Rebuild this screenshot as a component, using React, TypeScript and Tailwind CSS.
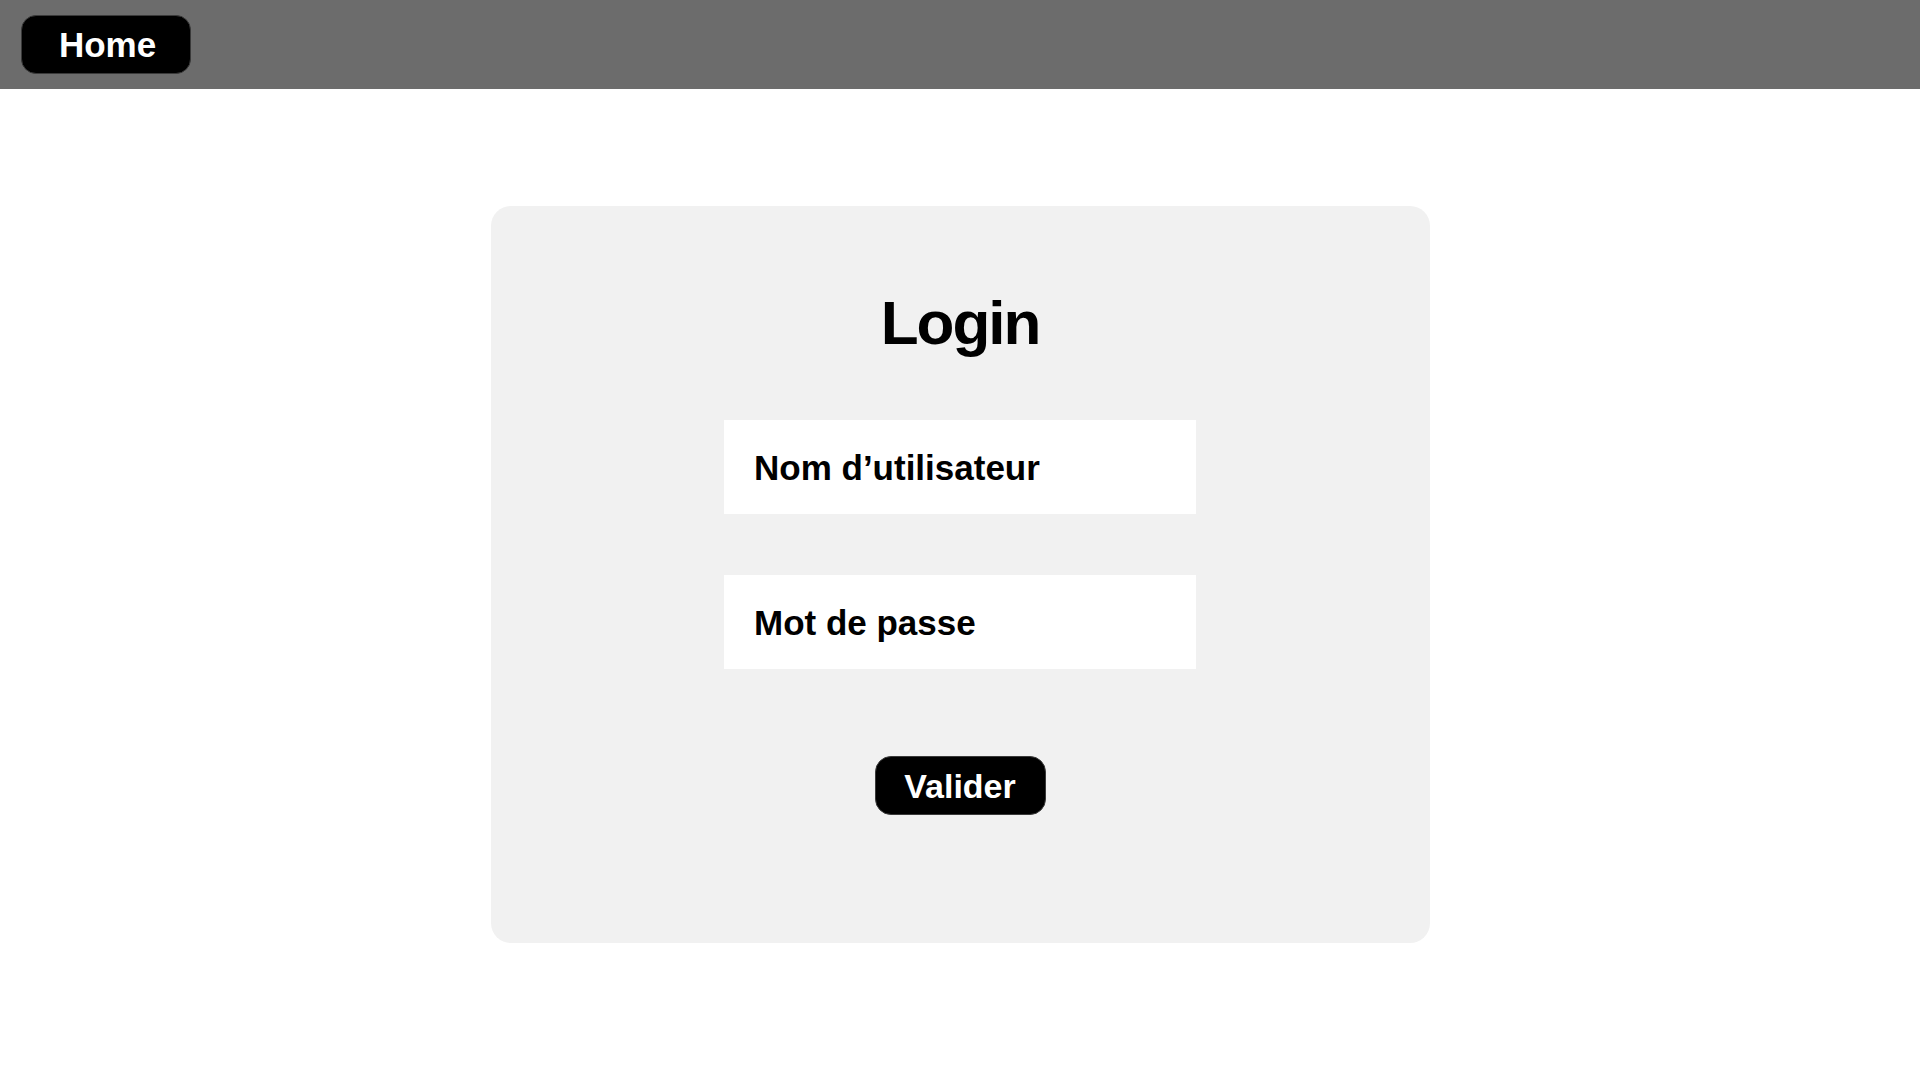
import React from 'react';

const App: React.FC = () => {
  return (
    <div className="min-h-screen bg-white font-['Liberation_Sans',Arial,sans-serif] text-black">
      {/* Top bar */}
      <header className="h-[89px] bg-[#6c6c6c] flex items-center pl-[21px]">
        <button className="w-[170px] h-[59px] rounded-[15px] bg-black border border-[#3a3a3a] text-white text-[35px] font-bold leading-none flex items-center justify-center pl-[3px]">
          Home
        </button>
      </header>

      {/* Login card */}
      <main className="pt-[117px]">
        <div className="mx-auto w-[939px] h-[737px] rounded-[20px] bg-[#f1f1f1] pt-[86px] flex flex-col items-center">
          <h1 className="text-[62px] font-bold leading-none tracking-[-2px] h-[62px]">Login</h1>

          <div className="mt-[66px] flex flex-col gap-[61px]">
            <div className="w-[472px] h-[94px] bg-white flex items-center pl-[30px] text-[35px] font-bold leading-none">
              Nom d’utilisateur
            </div>
            <div className="w-[472px] h-[94px] bg-white flex items-center pl-[30px] text-[35px] font-bold leading-none">
              Mot de passe
            </div>
          </div>

          <button className="mt-[87px] w-[171px] h-[59px] rounded-[16px] bg-black border border-[#3a3a3a] text-white text-[34px] font-bold leading-none flex items-center justify-center">
            Valider
          </button>
        </div>
      </main>
    </div>
  );
};

export default App;
